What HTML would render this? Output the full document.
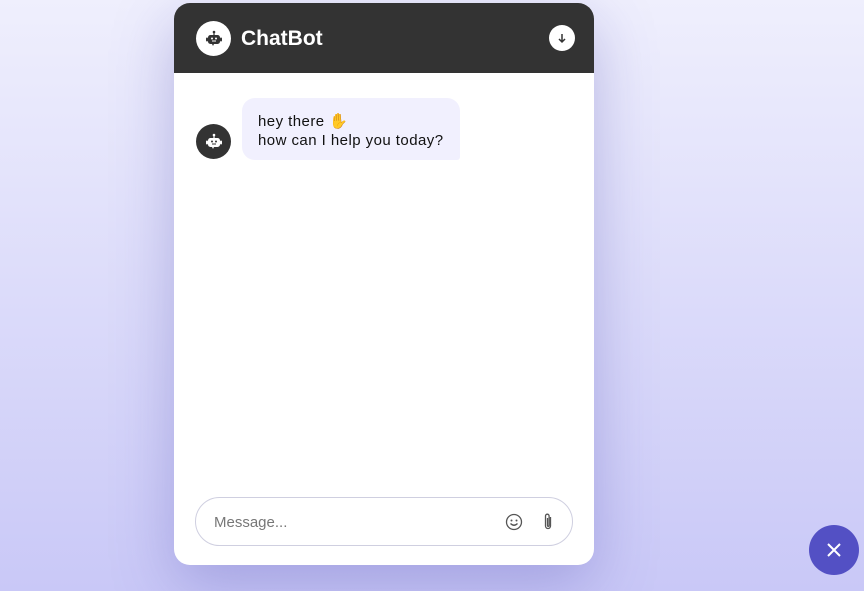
<!DOCTYPE html>
<html><head><meta charset="utf-8"><style>
*{margin:0;padding:0;box-sizing:border-box}
body{width:864px;height:591px;overflow:hidden;font-family:"Liberation Sans",sans-serif;background:linear-gradient(180deg,#efeffd 0%,#c9c8f7 100%);position:relative}
.panel{position:absolute;left:174px;top:3px;width:420px;height:562px;background:#fff;border-radius:16px;overflow:hidden;box-shadow:0 20px 60px rgba(90,85,180,.35)}
.head{height:70px;background:#333;position:relative}
.av{position:absolute;width:35px;height:35px;border-radius:50%;display:flex;align-items:center;justify-content:center}
.title{position:absolute;left:67px;top:24px;color:#fff;font-size:21px;font-weight:bold}
.dn{position:absolute;left:375px;top:22px;width:26px;height:26px;border-radius:50%;background:#fff;display:flex;align-items:center;justify-content:center}
.bub{position:absolute;left:68px;top:95px;width:218px;height:62px;background:#f1f0fe;border-radius:13px 13px 3px 13px;padding:14px 16px;font-size:15px;line-height:19px;color:#111;letter-spacing:0.45px}
.inp{position:absolute;left:21px;top:494px;width:378px;height:49px;border:1px solid #cfcfe0;border-radius:25px;font-size:15px;color:#777;padding:16px 18px}
.close{position:absolute;left:809px;top:525px;width:50px;height:50px;border-radius:50%;background:#5350c4;display:flex;align-items:center;justify-content:center}
</style></head><body>
<div class="panel">
<div class="head">
<div class="av" style="left:22px;top:18px;background:#fff">
<svg width="20" height="20" viewBox="0 0 20 20"><circle cx="10" cy="3" r="1.3" fill="#333"/><rect x="9.4" y="3" width="1.2" height="3" fill="#333"/><rect x="4" y="6" width="12" height="9" rx="2.5" fill="#333"/><rect x="2" y="8.5" width="2" height="4" rx="1" fill="#333"/><rect x="16" y="8.5" width="2" height="4" rx="1" fill="#333"/><circle cx="8" cy="9.5" r="1" fill="#fff"/><circle cx="12" cy="9.5" r="1" fill="#fff"/><path d="M8 12h4" stroke="#fff" stroke-width="1"/><path d="M8 15l1 2 1-2z" fill="#333"/></svg></div>
<div class="title">ChatBot</div>
<div class="dn"><svg width="12" height="12" viewBox="0 0 12 12"><path d="M6 2v8M3 7l3 3 3-3" stroke="#333" stroke-width="1.5" fill="none"/></svg></div>
</div>
<div class="av" style="left:22px;top:121px;background:#333">
<svg width="20" height="20" viewBox="0 0 20 20"><circle cx="10" cy="3" r="1.3" fill="#fff"/><rect x="9.4" y="3" width="1.2" height="3" fill="#fff"/><rect x="4" y="6" width="12" height="9" rx="2.5" fill="#fff"/><rect x="2" y="8.5" width="2" height="4" rx="1" fill="#fff"/><rect x="16" y="8.5" width="2" height="4" rx="1" fill="#fff"/><circle cx="8" cy="9.5" r="1" fill="#333"/><circle cx="12" cy="9.5" r="1" fill="#333"/><path d="M8 12h4" stroke="#333" stroke-width="1"/><path d="M8 15l1 2 1-2z" fill="#fff"/></svg></div>
<div class="bub">hey there <span style="color:#e8a800">✋</span><br>how can I help you today?</div>
<div class="inp">Message...
<svg style="position:absolute;left:309px;top:15px" width="18" height="18" viewBox="0 0 18 18"><circle cx="9" cy="9" r="7.5" stroke="#555" stroke-width="1.3" fill="none"/><circle cx="6.5" cy="7.5" r="1" fill="#555"/><circle cx="11.5" cy="7.5" r="1" fill="#555"/><path d="M5.5 10.5q3.5 3.5 7 0" stroke="#555" stroke-width="1.3" fill="none"/></svg>
<svg style="position:absolute;left:345px;top:14px" width="14" height="20" viewBox="0 0 14 20"><path d="M9.5 5v9a2.5 2.5 0 0 1-5 0V4a1.8 1.8 0 0 1 3.6 0v9.5a.8.8 0 0 1-1.6 0V6" stroke="#555" stroke-width="1.3" fill="none"/></svg>
</div>
</div>
<div class="close"><svg width="18" height="18" viewBox="0 0 18 18"><path d="M3 3l12 12M15 3L3 15" stroke="#fff" stroke-width="2"/></svg></div>
</body></html>
